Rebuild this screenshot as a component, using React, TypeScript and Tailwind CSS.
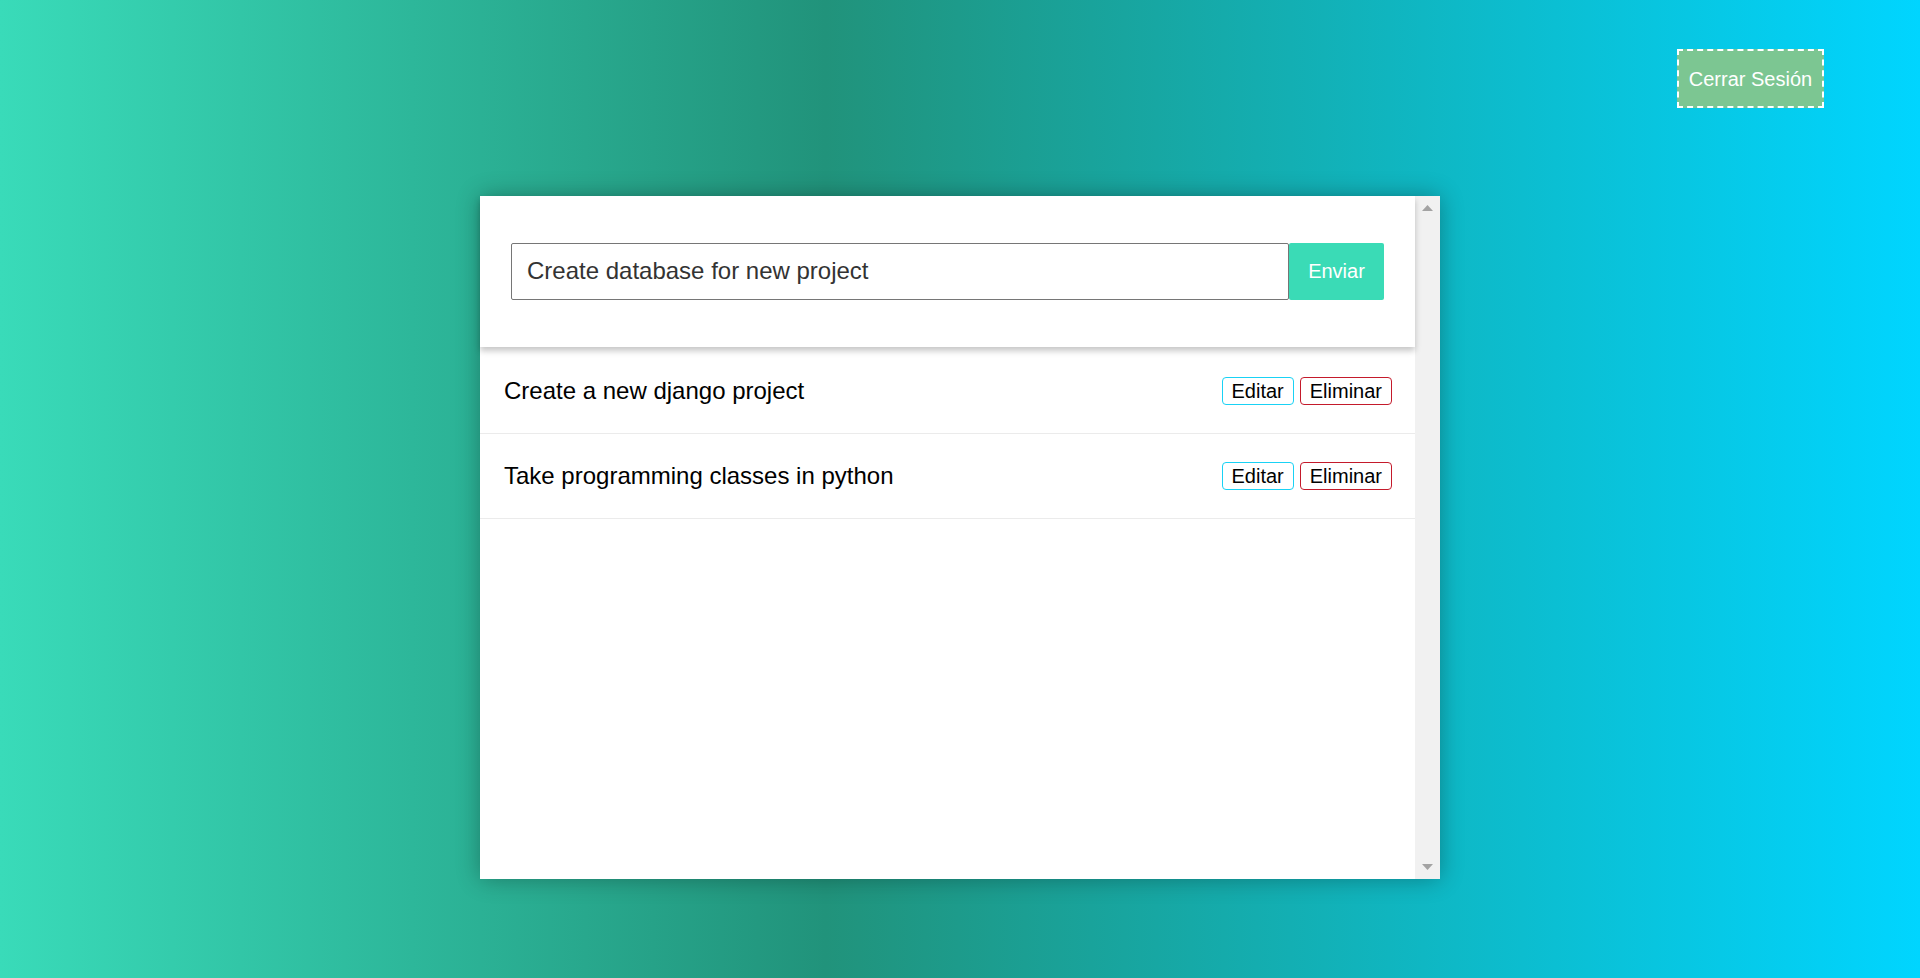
import React from "react";

const tasks = ["Create a new django project", "Take programming classes in python"];

export default function App() {
  return (
    <div
      className="w-full h-[978px] flex flex-col overflow-hidden bg-[linear-gradient(to_right,#39dbb9_0%,#21937b_43%,#00d5ff_100%)]"
      style={{ fontFamily: '"Liberation Sans", Arial, sans-serif' }}
    >
      <div className="flex justify-end pt-[49px] pr-[96px]">
        <button className="h-[59px] w-[147px] border-2 border-dashed border-white bg-[#7cc692] text-white text-[20px] flex items-center justify-center">
          Cerrar Sesión
        </button>
      </div>
      <div className="mt-[88px] mx-auto w-[960px] h-[683px] bg-white flex shadow-[0_0_22px_rgba(0,0,0,0.3)]">
        <div className="flex-1 flex flex-col">
          <div className="h-[151px] px-[31px] flex items-center shadow-[0_4px_6px_rgba(0,0,0,0.22)] relative z-10">
            <div className="flex w-full h-[57px] -mt-[1px]">
              <input
                className="flex-1 h-full border border-[#767676] rounded-[2px] px-[15px] text-[24px] text-[#333] outline-none"
                defaultValue="Create database for new project"
                style={{ fontFamily: '"Liberation Sans", Arial, sans-serif' }}
              />
              <button className="w-[95px] h-full bg-[#3adbb6] text-white text-[20px] rounded-[2px]">
                Enviar
              </button>
            </div>
          </div>
          <div className="mt-[2px]">
            {tasks.map((t, i) => (
              <div
                key={i}
                className="flex items-center justify-between pl-[24px] pr-[23px] pb-[1px] border-b border-[#ebebeb] h-[85px]"
              >
                <span className="text-[24px] text-black">{t}</span>
                <div className="flex gap-[6px]">
                  <button className="h-[28px] px-[9px] border border-[#19d2f5] rounded-[4px] text-[20px] text-black leading-none flex items-center">
                    Editar
                  </button>
                  <button className="h-[28px] px-[9px] border border-[#c41a2b] rounded-[4px] text-[20px] text-black leading-none flex items-center">
                    Eliminar
                  </button>
                </div>
              </div>
            ))}
          </div>
        </div>
        <div className="w-[25px] bg-[#f1f1f1] flex flex-col justify-between items-center py-[9px]">
          <svg width="11" height="6" viewBox="0 0 11 6">
            <polygon points="5.5,0 11,6 0,6" fill="#a3a3a3" />
          </svg>
          <svg width="11" height="6" viewBox="0 0 11 6">
            <polygon points="0,0 11,0 5.5,6" fill="#a3a3a3" />
          </svg>
        </div>
      </div>
    </div>
  );
}
